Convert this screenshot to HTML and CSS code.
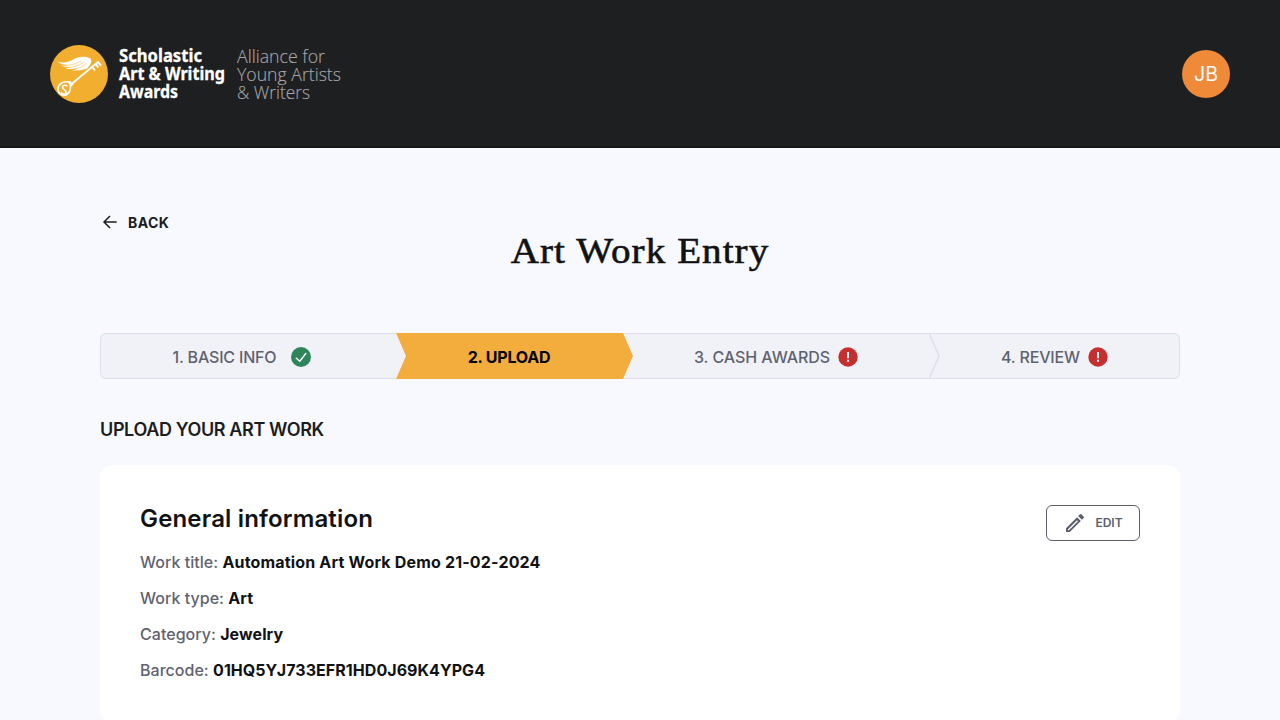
FILE: index.html
```html
<!DOCTYPE html>
<html lang="en">
<head>
<meta charset="utf-8">
<title>Art Work Entry</title>
<link rel="stylesheet" href="styles.css">
</head>
<body>
<header class="header">
  <svg class="logo" width="300" height="60" viewBox="49 44 300 60" role="img" aria-label="Scholastic Art &amp; Writing Awards">
    <circle cx="79" cy="74" r="29" fill="#f2ae2e"/>
    <g fill="none" stroke="#fff">
      <path d="M71 84.500L98 62" stroke-width="1.900"/>
      <path d="M91.500 66L95 70.500M95 63.500L98.500 67.500M97.500 61.500L101 65.500" stroke-width="2"/>
      <path d="M69.500 82C64 81 59 83 58 88C57.500 93 62 96.500 66 95C70.500 93 71.500 87 69.500 82Z" stroke-width="1.600"/>
      <path d="M67.500 86C64 84 61.500 86 63 88.500C64.500 90 67 91 66 93C65 94.500 63 94.500 61 92.500" stroke-width="1.500"/>
      <path d="M69 82L72.500 85.500" stroke-width="3"/>
    </g>
    <path d="M57 61.500C64 63.500 69 62 74 59C80 56 86 56 90.500 58.500L91.500 61.500L90 65L87 68.500C83 70.500 78 70 72 71L78 68.500C73 69 69 69.500 65 68.500L73 67C68 67.500 64 67 61 65.500L69 65C64 65 60 64 57 61.500Z" fill="#fff"/>
    <path d="M62 65.200C70 66 76 64 81 61M66 67.400C74 67.500 79 65.500 84 62M73 69C79 69 83 66.500 86 63.500" fill="none" stroke="#f2ae2e" stroke-width=".5"/>
    <g class="logo-main">
      <text x="119" y="62" textLength="83" lengthAdjust="spacingAndGlyphs">Scholastic</text>
      <text x="119" y="80" textLength="106" lengthAdjust="spacingAndGlyphs">Art &amp; Writing</text>
      <text x="119" y="98" textLength="59" lengthAdjust="spacingAndGlyphs">Awards</text>
    </g>
    <g class="logo-sub">
      <text x="237" y="62.500" textLength="88" lengthAdjust="spacingAndGlyphs">Alliance for</text>
      <text x="237" y="80.500" textLength="104" lengthAdjust="spacingAndGlyphs">Young Artists</text>
      <text x="237" y="98.500" textLength="73" lengthAdjust="spacingAndGlyphs">&amp; Writers</text>
    </g>
  </svg>
  <div class="avatar">JB</div>
</header>
<main class="page">
  <a class="back">
    <svg width="20" height="20" viewBox="0 0 20 20" fill="none" stroke="#1c1d1f" stroke-width="1.500"><path d="M16.700 10H4.500M10 4L4 10L10 16"/></svg>
    <span>BACK</span>
  </a>
  <h1 class="title">Art Work Entry</h1>
  <nav class="stepper">
    <div class="step step-basic"><span>1. BASIC INFO</span>
      <svg width="20" height="20" viewBox="0 0 20 20"><circle cx="10" cy="10" r="10" fill="#2e8559"/><path d="M4.800 10.800L8.800 14.200L15.200 6" fill="none" stroke="#fff" stroke-width="1.400"/></svg>
    </div>
    <div class="step step-upload"><span>2. UPLOAD</span></div>
    <div class="step step-cash"><span>3. CASH AWARDS</span>
      <svg width="20" height="20" viewBox="0 0 20 20"><circle cx="10" cy="10" r="9.700" fill="#c62f2f"/><path d="M10 5V11.200M10 12.800V14.700" stroke="#fff" stroke-width="2"/></svg>
    </div>
    <div class="step step-review">
      <svg class="chevron" width="12" height="44" viewBox="0 0 12 44" fill="none" stroke="#dddfea" stroke-width="1.500"><path d="M.5 0L10 22L.5 44"/></svg>
      <span>4. REVIEW</span>
      <svg width="20" height="20" viewBox="0 0 20 20"><circle cx="10" cy="10" r="9.700" fill="#c62f2f"/><path d="M10 5V11.200M10 12.800V14.700" stroke="#fff" stroke-width="2"/></svg>
    </div>
  </nav>
  <h2 class="section-title">UPLOAD YOUR ART WORK</h2>
  <section class="card">
    <div class="card-head">
      <h3 class="card-title">General information</h3>
      <button class="edit">
        <svg width="24" height="24" viewBox="0 0 24 24" fill="#5b5e6b"><path fill-rule="evenodd" d="M3 17.250V21h3.750L17.810 9.940l-3.750-3.750L3 17.250zM5.900 19.200H5v-.9l9.060-9.060.9.900L5.900 19.200zM20.710 5.630l-2.340-2.340a1 1 0 0 0-1.410 0l-1.830 1.830 3.750 3.750 1.830-1.830a1 1 0 0 0 0-1.410z"/></svg>
        <span>EDIT</span>
      </button>
    </div>
    <p class="row">Work title: <b class="v-title">Automation Art Work Demo 21-02-2024</b></p>
    <p class="row">Work type: <b>Art</b></p>
    <p class="row">Category: <b>Jewelry</b></p>
    <p class="row">Barcode: <b class="v-code">01HQ5YJ733EFR1HD0J69K4YPG4</b></p>
  </section>
</main>
</body>
</html>
```
FILE: styles.css
```css
* { box-sizing: border-box; }
body {
  margin: 0;
  height: 720px;
  overflow: hidden;
  background: #f8f9fe;
  color: #111214;
  font-family: Inter, "Liberation Sans", sans-serif;
}
.header {
  height: 148px;
  padding: 0 50px 0 49px;
  display: flex;
  align-items: center;
  justify-content: space-between;
  background: #1e1f21;
  border-bottom: 2px solid #17181a;
  border-top: 2px solid #1e1f21;
}
.logo-main { font: 700 18px "Noto Sans", sans-serif; fill: #fff; stroke: #fff; stroke-width: .3px; }
.logo-sub { font: 300 18px "Open Sans", sans-serif; fill: #a5a6a8; stroke: #a5a6a8; stroke-width: .15px; }
.avatar {
  width: 48px;
  height: 48px;
  border-radius: 50%;
  display: flex;
  align-items: center;
  justify-content: center;
  background: #ee8a38;
  color: #fff;
  font-size: 19.5px;
}
.page { padding: 62px 100px 0; }
.back {
  display: flex;
  align-items: center;
  gap: 8px;
  height: 24px;
  width: 80px;
  font-size: 14px;
  font-weight: 700;
  letter-spacing: .4px;
  color: #1c1d1f;
}
.title {
  margin: -7px 0 0;
  height: 48px;
  text-align: center;
  font: 400 36px/48px "Liberation Serif", serif;
  letter-spacing: 1px;
  transform: scaleX(1.085);
  -webkit-text-stroke: .6px #111214;
}
.stepper {
  display: flex;
  height: 46px;
  margin-top: 58px;
  border-radius: 6px;
  background: #f1f2f8;
  box-shadow: inset 0 0 0 1px #dddfea;
}
.step {
  display: flex;
  align-items: center;
  justify-content: center;
  gap: 8px;
  padding-top: 2px;
  font-size: 16px;
  font-weight: 500;
  letter-spacing: -.15px;
  color: #5f626f;
  white-space: nowrap;
}
.step-basic { width: 296px; gap: 15px; padding-right: 12px; letter-spacing: -.18px; }
.step-upload {
  width: 237px;
  padding-right: 11px;
  background: #f2ad3d;
  clip-path: polygon(0 0, 227px 0, 100% 50%, 227px 100%, 0 100%, 10px 50%);
  color: #000;
  font-weight: 700;
  letter-spacing: -.2px;
}
.step-cash { width: 296px; padding-right: 10px; letter-spacing: -.05px; }
.step-review { width: 251px; position: relative; }
.chevron { position: absolute; left: 0; top: 1px; }
.section-title { margin: 39px 0 0; font-size: 18px; line-height: 24px; font-weight: 600; letter-spacing: -.37px; color: #1c1d1f; }
.card { margin-top: 23px; padding: 40px 40px 34px; background: #fff; border-radius: 12px; }
.card-head { display: flex; justify-content: space-between; height: 39px; }
.card-title { margin: 0; font-size: 24px; line-height: 28px; font-weight: 600; letter-spacing: .16px; }
.edit {
  width: 94px;
  height: 36px;
  padding: 0 0 1px;
  display: flex;
  align-items: center;
  justify-content: center;
  gap: 8px;
  border: 1px solid #5b5e6b;
  border-radius: 6px;
  background: #fff;
  font: 600 12px Inter, sans-serif;
  color: #5b5e6b;
}
.row { margin: 0 0 8px; line-height: 28px; height: 28px; padding-top: 4px; font-size: 16px; font-weight: 450; letter-spacing: .03px; color: #5f626f; }
.row b { font-weight: 700; letter-spacing: .1px; color: #111214; }
.row .v-title { letter-spacing: .17px; }
.row .v-code { letter-spacing: .05px; }
```
